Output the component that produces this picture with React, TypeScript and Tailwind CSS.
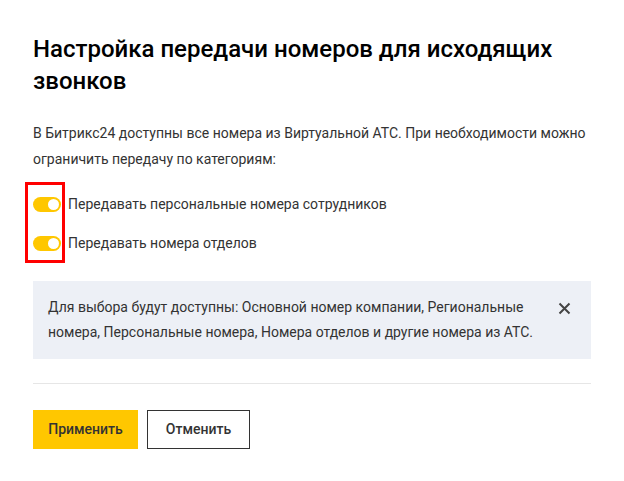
import React, { useState } from "react";

const Toggle = ({ on, onChange }: { on: boolean; onChange: () => void }) => (
  <button
    onClick={onChange}
    className={`relative w-[28px] h-[15px] rounded-full shrink-0 ${on ? "bg-[#ffc700]" : "bg-[#c9ccd0]"}`}
  >
    <span
      className={`absolute top-[2px] w-[11px] h-[11px] rounded-full bg-white ${on ? "right-[2px]" : "left-[2px]"}`}
    />
  </button>
);

export default function App() {
  const [personal, setPersonal] = useState(true);
  const [departments, setDepartments] = useState(true);
  const [showInfo, setShowInfo] = useState(true);

  return (
    <div className="w-[624px] h-[481px] bg-white font-['Roboto',sans-serif] text-[#151515]">
      <div className="px-[33px] pt-[33px]">
        <h1 className="text-[24px] leading-[32px] font-medium text-black">
          Настройка передачи номеров для исходящих звонков
        </h1>

        <p className="mt-[23px] text-[14px] leading-[26px] text-[#333]">
          В Битрикс24 доступны все номера из Виртуальной АТС. При необходимости можно
          ограничить передачу по категориям:
        </p>

        <div className="relative mt-[25px] flex flex-col gap-[24px]">
          <label className="flex items-center gap-[7px] text-[14px] leading-[15px] text-[#333]">
            <Toggle on={personal} onChange={() => setPersonal(!personal)} />
            Передавать персональные номера сотрудников
          </label>
          <label className="flex items-center gap-[7px] text-[14px] leading-[15px] text-[#333]">
            <Toggle on={departments} onChange={() => setDepartments(!departments)} />
            Передавать номера отделов
          </label>
          <div className="absolute left-[-8px] top-[-15px] w-[40px] h-[81px] border-[3px] border-[#f00] pointer-events-none" />
        </div>

        {showInfo && (
          <div className="mt-[30px] h-[78px] bg-[#edf0f6] pl-[15px] pr-[20px] pt-[14px] flex items-start justify-between">
            <p className="text-[14px] leading-[25px] text-[#333]">
              Для выбора будут доступны: Основной номер компании, Региональные
              <br />
              номера, Персональные номера, Номера отделов и другие номера из АТС.
            </p>
            <button onClick={() => setShowInfo(false)} className="mt-[7px] text-[#333]">
              <svg width="13" height="13" viewBox="0 0 13 13">
                <path d="M1.5 1.5 L11.5 11.5 M11.5 1.5 L1.5 11.5" stroke="#444" strokeWidth="2" />
              </svg>
            </button>
          </div>
        )}

        <div className="mt-[24px] h-px bg-[#e6e6e6]" />

        <div className="mt-[26px] flex gap-[9px]">
          <button className="h-[39px] w-[105px] bg-[#ffc700] text-[14px] font-medium text-[#333]">
            Применить
          </button>
          <button className="h-[39px] w-[103px] border border-[#333] text-[14px] font-medium text-[#333]">
            Отменить
          </button>
        </div>
      </div>
    </div>
  );
}
